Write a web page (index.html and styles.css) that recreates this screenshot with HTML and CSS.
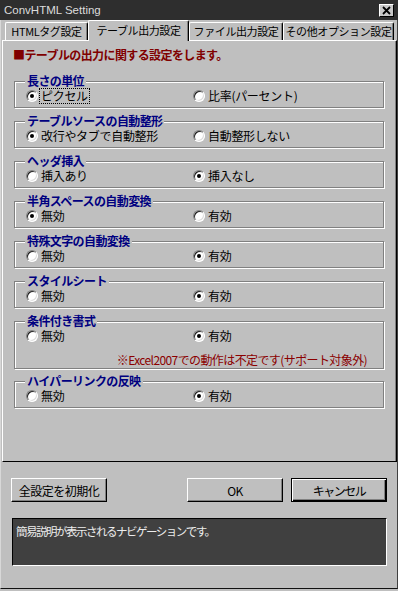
FILE: index.html
```html
<!DOCTYPE html>
<html lang="ja">
<head>
    <meta charset="UTF-8">
    <title>ConvHTML Setting</title>
    <link rel="stylesheet" href="styles.css">
</head>
<body>
    <div class="titlebar">
        <span class="title">ConvHTML Setting</span>
        <span class="close-btn">
            <svg width="13" height="11" viewBox="0 0 13 11"><path d="M3 2l7 7M10 2l-7 7" stroke="#000" stroke-width="1.8" fill="none"/></svg>
        </span>
    </div>
    <div class="dialog">
        <div class="tabs">
            <div class="tab tab-html">HTMLタグ設定</div>
            <div class="tab tab-table active">テーブル出力設定</div>
            <div class="tab tab-file">ファイル出力設定</div>
            <div class="tab tab-other">その他オプション設定</div>
        </div>

        <div class="panel">
            <p class="heading">■テーブルの出力に関する設定をします。</p>

            <div class="group">
                <div class="group-title">長さの単位</div>
                <div class="options">
                    <label class="option"><span class="radio checked"></span><span class="focus">ピクセル</span></label>
                    <label class="option"><span class="radio"></span>比率(パーセント)</label>
                </div>
            </div>

            <div class="group">
                <div class="group-title">テーブルソースの自動整形</div>
                <div class="options">
                    <label class="option"><span class="radio checked"></span>改行やタブで自動整形</label>
                    <label class="option"><span class="radio"></span>自動整形しない</label>
                </div>
            </div>

            <div class="group">
                <div class="group-title">ヘッダ挿入</div>
                <div class="options">
                    <label class="option"><span class="radio"></span>挿入あり</label>
                    <label class="option"><span class="radio checked"></span>挿入なし</label>
                </div>
            </div>

            <div class="group">
                <div class="group-title">半角スペースの自動変換</div>
                <div class="options">
                    <label class="option"><span class="radio checked"></span>無効</label>
                    <label class="option"><span class="radio"></span>有効</label>
                </div>
            </div>

            <div class="group">
                <div class="group-title">特殊文字の自動変換</div>
                <div class="options">
                    <label class="option"><span class="radio"></span>無効</label>
                    <label class="option"><span class="radio checked"></span>有効</label>
                </div>
            </div>

            <div class="group">
                <div class="group-title">スタイルシート</div>
                <div class="options">
                    <label class="option"><span class="radio"></span>無効</label>
                    <label class="option"><span class="radio checked"></span>有効</label>
                </div>
            </div>

            <div class="group group-tall">
                <div class="group-title">条件付き書式</div>
                <div class="options">
                    <label class="option"><span class="radio"></span>無効</label>
                    <label class="option"><span class="radio checked"></span>有効</label>
                </div>
                <p class="note">※Excel2007での動作は不定です(サポート対象外)</p>
            </div>

            <div class="group">
                <div class="group-title">ハイパーリンクの反映</div>
                <div class="options">
                    <label class="option"><span class="radio"></span>無効</label>
                    <label class="option"><span class="radio checked"></span>有効</label>
                </div>
            </div>
        </div>

        <div class="actions">
            <button type="button" class="btn">全設定を初期化</button>
            <button type="button" class="btn btn-ok">OK</button>
            <button type="button" class="btn btn-cancel">キャンセル</button>
        </div>

        <div class="nav">簡易説明が表示されるナビゲーションです。</div>
    </div>
</body>
</html>
```

FILE: styles.css
```css
body {
    margin: 0;
    width: 398px;
    height: 591px;
    background-color: #bfbfbf;
    font-family: "Noto Sans CJK JP", sans-serif;
    font-size: 12px;
    color: #000;
    overflow: hidden;
}
.titlebar {
    display: flex;
    justify-content: space-between;
    align-items: center;
    height: 20px;
    padding: 0 4px 0 4px;
    background-color: #2e2e2e;
    box-sizing: border-box;
}
.title {
    font-family: "Liberation Sans", Arial, sans-serif;
    font-size: 11.5px;
    color: #dcdcdc;
    line-height: 14px;
}
.close-btn {
    display: flex;
    align-items: center;
    justify-content: center;
    width: 15px;
    height: 13px;
    box-sizing: border-box;
    background-color: #c8c8c8;
    border: 1px solid;
    border-color: #fff #000 #000 #fff;
}
.dialog {
    height: 569px;
    box-sizing: border-box;
    border-left: 1px solid #d8d8d8;
    border-right: 1px solid #404040;
    border-bottom: 1px solid #111;
}
.tabs {
    display: flex;
    align-items: flex-end;
    height: 20px;
    padding-left: 4px;
}
.tab {
    height: 18px;
    box-sizing: border-box;
    border-top: 1px solid #fff;
    border-left: 1px solid #fff;
    border-right: 1px solid #000;
    border-radius: 2px 2px 0 0;
    box-shadow: inset -1px 0 0 #808080;
    text-align: center;
    font-size: 11px;
    line-height: 16px;
    letter-spacing: -0.4px;
    white-space: nowrap;
    overflow: hidden;
}
.tab-html { width: 83px; }
.tab-table { width: 101px; }
.tab-file { width: 94px; }
.tab-other { width: 111px; }
.tab.active {
    position: relative;
    z-index: 1;
    height: 21px;
    margin-bottom: -1px;
    background-color: #bfbfbf;
    line-height: 18px;
}
.panel {
    height: 422px;
    margin-left: 1px;
    box-sizing: border-box;
    border-top: 1px solid #fff;
    border-left: 1px solid #fff;
    border-right: 1px solid #000;
    border-bottom: 1px solid #000;
    box-shadow: inset -1px 0 0 #808080;
}
.heading {
    margin: 6px 0 0 10px;
    line-height: 16px;
    font-weight: bold;
    color: #800000;
    letter-spacing: -0.6px;
}
.group {
    width: 370px;
    margin: 13px 0 0 11px;
    padding: 0 0 4px 0;
    box-sizing: border-box;
    border: 1px solid #808080;
    box-shadow: inset 1px 1px 0 #fff, 1px 1px 0 #fff;
}
.heading + .group {
    margin-top: 18px;
}
.group-tall {
    padding-bottom: 1px;
}
.group-tall + .group {
    margin-top: 12px;
}
.group-title {
    width: fit-content;
    height: 14px;
    margin: -8px 0 0 10px;
    padding: 0 2px;
    background-color: #bfbfbf;
    line-height: 14px;
    font-weight: bold;
    color: #000080;
    letter-spacing: -0.6px;
    white-space: nowrap;
}
.options {
    display: grid;
    grid-template-columns: 167px auto;
    margin-top: 1px;
    padding-left: 11px;
}
.option {
    display: flex;
    align-items: center;
    gap: 3px;
    height: 14px;
    line-height: 14px;
    letter-spacing: -0.3px;
    white-space: nowrap;
}
.radio {
    display: grid;
    place-items: center;
    width: 12px;
    height: 12px;
    flex: none;
    box-sizing: border-box;
    border-radius: 50%;
    background-color: #fff;
    border: 1px solid;
    border-color: #808080 #fff #fff #808080;
    box-shadow: inset 1px 1px 0 #202020, inset -1px -1px 0 #dcdcdc;
}
.radio.checked::after {
    content: "";
    width: 4px;
    height: 4px;
    border-radius: 50%;
    background-color: #000;
}
.focus {
    outline: 1px dotted #000;
    outline-offset: 0;
    padding: 0 1px;
    margin-left: -1px;
}
.note {
    margin: 10px 0 0 0;
    padding-right: 16px;
    text-align: right;
    line-height: 14px;
    color: #8b0000;
    letter-spacing: -0.6px;
}
.actions {
    display: flex;
    margin-top: 16px;
    padding: 0 10px 0 10px;
}
.btn {
    width: 96px;
    height: 24px;
    padding: 0;
    box-sizing: border-box;
    background-color: #bfbfbf;
    border: 1px solid;
    border-color: #fff #000 #000 #fff;
    box-shadow: inset -1px -1px 0 #808080;
    font-family: "Noto Sans CJK JP", sans-serif;
    font-size: 12px;
    letter-spacing: -0.5px;
    color: #000;
}
.btn-ok {
    margin-left: auto;
}
.btn-cancel {
    margin-left: 8px;
    border-color: #000;
    box-shadow: inset 1px 1px 0 #fff, inset -1px -1px 0 #000, inset -2px -2px 0 #808080;
    letter-spacing: -1.5px;
}
.nav {
    height: 48px;
    margin: 16px 10px 0 11px;
    padding: 4px 3px;
    box-sizing: border-box;
    background-color: #404040;
    border: 1px solid;
    border-color: #000 #fff #fff #000;
    color: #ececec;
    font-size: 11.5px;
    line-height: 16px;
    letter-spacing: -1.5px;
}
```
